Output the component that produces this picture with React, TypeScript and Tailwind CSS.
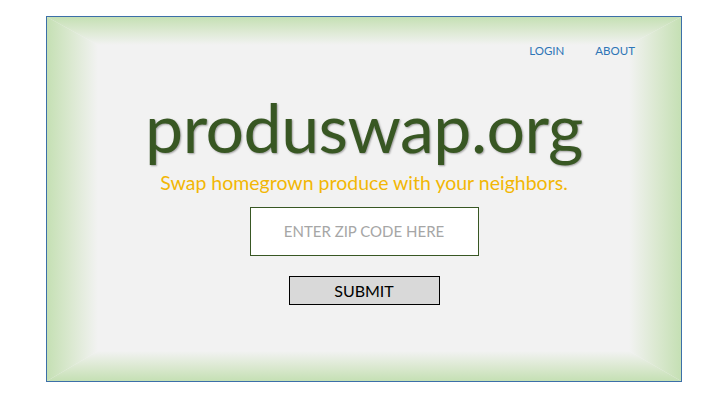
import React from "react";

function FrameBg() {
  const W = 634;
  const H = 364;
  const L = 51;
  const T = 28;
  const R = 52;
  const B = 30;
  const edge = "#c5e0b4";
  const mid = "#dce9d2";
  const inner = "#f2f2f2";
  return (
    <svg
      className="absolute inset-0 w-full h-full"
      viewBox={`0 0 ${W} ${H}`}
      preserveAspectRatio="none"
    >
      <defs>
        <linearGradient id="gt" gradientUnits="userSpaceOnUse" x1="0" y1="0" x2="0" y2={T}>
          <stop offset="0" stopColor={edge} />
          <stop offset="0.5" stopColor={mid} />
          <stop offset="1" stopColor={inner} />
        </linearGradient>
        <linearGradient id="gb" gradientUnits="userSpaceOnUse" x1="0" y1={H} x2="0" y2={H - B}>
          <stop offset="0" stopColor={edge} />
          <stop offset="0.5" stopColor={mid} />
          <stop offset="1" stopColor={inner} />
        </linearGradient>
        <linearGradient id="gl" gradientUnits="userSpaceOnUse" x1="0" y1="0" x2={L} y2="0">
          <stop offset="0" stopColor={edge} />
          <stop offset="0.5" stopColor={mid} />
          <stop offset="1" stopColor={inner} />
        </linearGradient>
        <linearGradient id="gr" gradientUnits="userSpaceOnUse" x1={W} y1="0" x2={W - R} y2="0">
          <stop offset="0" stopColor={edge} />
          <stop offset="0.5" stopColor={mid} />
          <stop offset="1" stopColor={inner} />
        </linearGradient>
      </defs>
      <rect x="0" y="0" width={W} height={H} fill={inner} />
      <polygon points={`0,0 ${W},0 ${W - R},${T} ${L},${T}`} fill="url(#gt)" />
      <polygon points={`0,${H} ${W},${H} ${W - R},${H - B} ${L},${H - B}`} fill="url(#gb)" />
      <polygon points={`0,0 ${L},${T} ${L},${H - B} 0,${H}`} fill="url(#gl)" />
      <polygon points={`${W},0 ${W - R},${T} ${W - R},${H - B} ${W},${H}`} fill="url(#gr)" />
    </svg>
  );
}

export default function App() {
  return (
    <div className="w-[720px] h-[405px] bg-white pt-[16px] pl-[46px] [font-family:Lato,'Open_Sans',sans-serif]">
      <div className="relative w-[636px] h-[366px] border border-[#3c6fa8]">
        <FrameBg />
        <div className="relative flex flex-col items-center h-full">
          <nav className="self-end flex gap-[31px] pr-[46px] pt-[27px] text-[11.5px] leading-[14px] text-[#2e75b6]">
            <a>LOGIN</a>
            <a>ABOUT</a>
          </nav>
          <h1 className="mt-[33px] text-[68px] leading-[72px] tracking-[-0.5px] text-[#385723] [text-shadow:1px_1px_2px_rgba(0,0,0,0.35)]">
            produswap.org
          </h1>
          <p className="mt-[8px] text-[19.5px] leading-[24px] text-[#f2b705]">
            Swap homegrown produce with your neighbors.
          </p>
          <div className="mt-[12px] w-[229px] h-[49px] bg-white border border-[#385723] flex items-center justify-center text-[15px] text-[#a6a6a6]">
            ENTER ZIP CODE HERE
          </div>
          <button className="mt-[20px] w-[151px] h-[29px] bg-[#d9d9d9] border border-black flex items-center justify-center text-[16px] text-black">
            SUBMIT
          </button>
        </div>
      </div>
    </div>
  );
}
